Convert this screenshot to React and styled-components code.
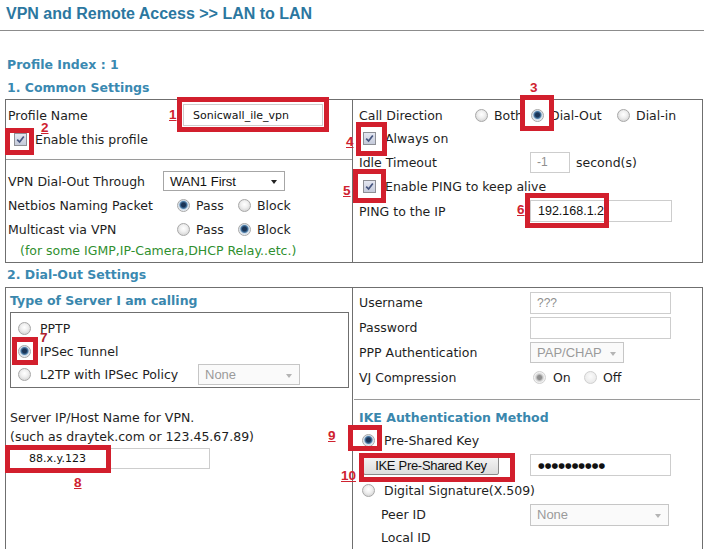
import React from "react";
import styled, { createGlobalStyle } from "styled-components";

const Global = createGlobalStyle`
  html, body { margin: 0; padding: 0; overflow: hidden; background: #fff; }
  body {
    font-family: "DejaVu Sans", Verdana, sans-serif;
    font-size: 12.5px;
    color: #1e1e1e;
  }
`;

const Page = styled.div`
  position: relative;
  width: 704px;
  height: 549px;
  overflow: hidden;
`;

const Title = styled.div`
  height: 31px;
  box-sizing: border-box;
  border-bottom: 1px solid #8c8c8c;
  padding-left: 6px;
  font: bold 16px "Liberation Sans", Arial, sans-serif;
  line-height: 28px;
  color: #2b77a0;
`;

const Content = styled.div`
  padding-top: 23px;
`;

const Heading = styled.div`
  height: 22px;
  line-height: 22px;
  padding-left: 7px;
  margin-top: ${(p) => p.$mt || 0}px;
  margin-bottom: ${(p) => p.$mb || 0}px;
  font-weight: bold;
  color: #3a89b1;
`;

const Table = styled.div`
  margin-left: 5px;
  width: 698px;
  height: ${(p) => p.$h}px;
  box-sizing: border-box;
  border: 1px solid #6f6f6f;
  display: grid;
  grid-template-columns: 347px 1fr;
`;

const Cell = styled.div`
  display: flex;
  flex-direction: column;
  padding-top: ${(p) => p.$pt || 0}px;
  border-right: ${(p) => (p.$divider ? "1px solid #6f6f6f" : "none")};
`;

const Row = styled.div`
  display: flex;
  align-items: center;
  height: ${(p) => p.$h}px;
  flex: none;
  padding-left: ${(p) => p.$pl || 0}px;
  margin-top: ${(p) => p.$mt || 0}px;
  white-space: nowrap;
`;

const Label = styled.span`
  width: ${(p) => p.$w}px;
  margin-left: ${(p) => p.$ml || 0}px;
  flex: none;
`;

const Unit = styled.span`
  margin-left: 6px;
`;

const Rule = styled.div`
  height: 1px;
  flex: none;
  background: #9a9a9a;
  margin: ${(p) => p.$m};
`;

const Field = styled.div`
  width: ${(p) => p.$w}px;
  height: ${(p) => p.$h}px;
  box-sizing: border-box;
  border: 1px solid #cdcdcd;
  background: #fff;
  display: flex;
  align-items: center;
  padding-left: ${(p) => p.$pl || 6}px;
  margin-left: ${(p) => p.$ml || 0}px;
  font-family: ${(p) =>
    p.$verdana ? `"DejaVu Sans", Verdana, sans-serif` : `"Liberation Sans", Arial, sans-serif`};
  font-size: ${(p) => p.$fs || 12}px;
  color: ${(p) => (p.$muted ? "#8f8f8f" : "#111")};
  flex: none;
`;

const Dots = styled.span`
  font-family: "DejaVu Sans", sans-serif;
  font-size: 7.6px;
  letter-spacing: 0.1px;
  color: #111;
`;

const Select = styled.div`
  position: relative;
  width: ${(p) => p.$w}px;
  height: ${(p) => p.$h}px;
  box-sizing: border-box;
  border: 1px solid ${(p) => (p.$off ? "#c6c6c6" : "#a6a6a6")};
  background: ${(p) => (p.$off ? "#fafafa" : "#fff")};
  display: flex;
  align-items: center;
  padding-left: 6px;
  font: 13px "Liberation Sans", Arial, sans-serif;
  color: ${(p) => (p.$off ? "#9a9a9a" : "#111")};
  flex: none;

  &::after {
    content: "";
    position: absolute;
    right: 7px;
    top: 50%;
    margin-top: -1px;
    border-left: 3.5px solid transparent;
    border-right: 3.5px solid transparent;
    border-top: 4px solid ${(p) => (p.$off ? "#b4b4b4" : "#222")};
  }
`;

const Opt = styled.span`
  display: inline-flex;
  align-items: center;
  gap: ${(p) => p.$gap || 6}px;
  width: ${(p) => (p.$w ? `${p.$w}px` : "auto")};
  flex: none;
`;

const RadioDot = styled.span`
  width: 13px;
  height: 13px;
  box-sizing: border-box;
  border-radius: 50%;
  flex: none;
  border: 1px solid ${(p) => (p.$dim ? "#d0d0d0" : "#a8a8a8")};
  background: ${(p) =>
    p.$on
      ? p.$dim
        ? "radial-gradient(circle, #8f8f8f 0 2px, #cfcfcf 3.5px, #f2f2f2 5px)"
        : "radial-gradient(circle at 50% 45%, #1b3557 0 2px, #4a7ca8 3.5px, #cfdbe7 4.5px, #eef2f6 6px)"
      : p.$dim
      ? "radial-gradient(circle at 50% 40%, #fbfbfb 0, #e4e4e4 100%)"
      : "radial-gradient(circle at 50% 40%, #ffffff 0, #f0f0f0 40%, #c9c9c9 100%)"};
`;

const Box = styled.span`
  width: 13px;
  height: 13px;
  box-sizing: border-box;
  border: 1px solid #8d8f95;
  background: linear-gradient(#e4e7f1, #c4cada);
  display: inline-flex;
  align-items: center;
  justify-content: center;
  flex: none;
  margin-left: ${(p) => p.$ml || 0}px;
  margin-right: ${(p) => p.$mr || 8}px;
`;

const Green = styled.span`
  color: #2f8f2f;
`;

const SubHead = styled.span`
  font-weight: bold;
  color: #3a87ad;
`;

const TypeBox = styled.div`
  margin: 1px 3px 0 4px;
  border: 1px solid #6f6f6f;
  padding: 4px 0 1px;
`;

const Note = styled.div`
  margin-top: ${(p) => p.$mt || 0}px;
  padding-left: 4px;
  line-height: 19px;
`;

const HostInput = styled(Field)`
  margin-top: 2px;
`;

const KeyButton = styled.div`
  width: 136px;
  height: 20px;
  box-sizing: border-box;
  margin-left: 4px;
  border: 1px solid #8a8a8a;
  border-radius: 2px;
  background: linear-gradient(#f6f6f6, #dcdcdc);
  display: flex;
  align-items: center;
  justify-content: center;
  font: 13px "Liberation Sans", Arial, sans-serif;
  letter-spacing: -0.3px;
  color: #111;
  flex: none;
`;

/* annotations drawn over the screenshot */
const Mark = styled.div`
  position: absolute;
  left: ${(p) => p.$x}px;
  top: ${(p) => p.$y}px;
  width: ${(p) => p.$w}px;
  height: ${(p) => p.$h}px;
  box-sizing: border-box;
  border: 5px solid #d21f2d;
  pointer-events: none;
`;

const Num = styled.span`
  position: absolute;
  left: ${(p) => p.$x}px;
  top: ${(p) => p.$y}px;
  font: bold 13.5px/14px "Liberation Sans", Arial, sans-serif;
  color: ${(p) => p.$c || "#cf2230"};
  text-decoration: ${(p) => (p.$u ? "underline" : "none")};
  text-underline-offset: 1px;
`;

const Radio = ({ on, dim, label, w, gap }) => (
  <Opt $w={w} $gap={gap}>
    <RadioDot $on={on} $dim={dim} />
    {label && <span>{label}</span>}
  </Opt>
);

const Check = ({ ml, mr }) => (
  <Box $ml={ml} $mr={mr}>
    <svg width="9" height="9" viewBox="0 0 9 9">
      <path d="M1.2 4.6 L3.6 7 L7.8 1.4" fill="none" stroke="#45557f" strokeWidth="1.7" />
    </svg>
  </Box>
);

const marks = [
  { x: 177, y: 97, w: 152, h: 35 },
  { x: 5, y: 128, w: 29, h: 27 },
  { x: 520, y: 95, w: 34, h: 36 },
  { x: 356, y: 122, w: 31, h: 34 },
  { x: 353, y: 169, w: 33, h: 34 },
  { x: 525, y: 193, w: 84, h: 35 },
  { x: 12, y: 337, w: 26, h: 28 },
  { x: 5, y: 445, w: 106, h: 28 },
  { x: 348, y: 425, w: 34, h: 26 },
  { x: 359, y: 453, w: 156, h: 29 },
];

const nums = [
  { n: "1", x: 169, y: 108, u: true },
  { n: "2", x: 41, y: 121, u: true },
  { n: "3", x: 530, y: 81 },
  { n: "4", x: 346, y: 135, u: true },
  { n: "5", x: 343, y: 184, u: true },
  { n: "6", x: 517, y: 203, u: true },
  { n: "7", x: 40, y: 331, c: "#b0202e" },
  { n: "8", x: 74, y: 476, u: true },
  { n: "9", x: 328, y: 429, u: true },
  { n: "10", x: 341, y: 469, u: true },
];

export default function App() {
  return (
    <Page>
      <Global />
      <Title>VPN and Remote Access &gt;&gt; LAN to LAN</Title>
      <Content>
        <Heading>Profile Index : 1</Heading>
        <Heading $mt={1} $mb={0}>1. Common Settings</Heading>
        <Table $h={164}>
          <Cell $divider $pt={3}>
            <Row $h={24} $pl={2}>
              <Label $w={175}>Profile Name</Label>
              <Field $w={140} $h={22} $pl={9} $verdana $fs={11}>
                Sonicwall_ile_vpn
              </Field>
            </Row>
            <Row $h={24} $pl={2}>
              <Check ml={6} mr={8} />
              Enable this profile
            </Row>
            <Rule $m="8px 0 9px" />
            <Row $h={24} $pl={2}>
              <Label $w={155}>VPN Dial-Out Through</Label>
              <Select $w={122} $h={20}>WAN1 First</Select>
            </Row>
            <Row $h={24} $pl={2}>
              <Label $w={169}>Netbios Naming Packet</Label>
              <Radio on label="Pass" w={61} />
              <Radio label="Block" />
            </Row>
            <Row $h={24} $pl={2}>
              <Label $w={169}>Multicast via VPN</Label>
              <Radio label="Pass" w={61} />
              <Radio on label="Block" />
            </Row>
            <Row $h={18} $pl={14}>
              <Green>(for some IGMP,IP-Camera,DHCP Relay..etc.)</Green>
            </Row>
          </Cell>
          <Cell $pt={3}>
            <Row $h={24} $pl={6}>
              <Label $w={116}>Call Direction</Label>
              <Radio label="Both" w={56} />
              <Radio on label="Dial-Out" w={86} />
              <Radio label="Dial-in" />
            </Row>
            <Row $h={23} $pl={6}>
              <Check ml={4} mr={9} />
              Always on
            </Row>
            <Row $h={24} $pl={6}>
              <Label $w={171}>Idle Timeout</Label>
              <Field $w={40} $h={21} $muted $fs={12}>
                -1
              </Field>
              <Unit>second(s)</Unit>
            </Row>
            <Row $h={25} $pl={6}>
              <Check ml={4} mr={9} />
              Enable PING to keep alive
            </Row>
            <Row $h={24} $pl={6}>
              <Label $w={171}>PING to the IP</Label>
              <Field $w={142} $h={22} $pl={7} $fs={12.5}>
                192.168.1.2
              </Field>
            </Row>
          </Cell>
        </Table>
        <Heading $mt={1} $mb={1}>2. Dial-Out Settings</Heading>
        <Table $h={290}>
          <Cell $divider>
            <Row $h={22} $mt={1} $pl={4}>
              <SubHead>Type of Server I am calling</SubHead>
            </Row>
            <TypeBox>
              <Row $h={23} $pl={7}>
                <Radio label="PPTP" gap={9} />
              </Row>
              <Row $h={23} $pl={7}>
                <Radio on label="IPSec Tunnel" gap={9} />
              </Row>
              <Row $h={23} $pl={7}>
                <Radio gap={9} />
                <Label $w={158} $ml={9}>
                  L2TP with IPSec Policy
                </Label>
                <Select $w={102} $h={21} $off>
                  None
                </Select>
              </Row>
            </TypeBox>
            <Note $mt={20}>Server IP/Host Name for VPN.</Note>
            <Note>(such as draytek.com or 123.45.67.89)</Note>
            <Row $h={23} $pl={1}>
              <HostInput $w={203} $h={21} $pl={21} $verdana $fs={11}>
                88.x.y.123
              </HostInput>
            </Row>
          </Cell>
          <Cell $pt={2}>
            <Row $h={25} $pl={6}>
              <Label $w={171}>Username</Label>
              <Field $w={141} $h={22} $muted $fs={12}>
                ???
              </Field>
            </Row>
            <Row $h={25} $pl={6}>
              <Label $w={171}>Password</Label>
              <Field $w={141} $h={22} />
            </Row>
            <Row $h={25} $pl={6}>
              <Label $w={171}>PPP Authentication</Label>
              <Select $w={94} $h={21} $off>
                PAP/CHAP
              </Select>
            </Row>
            <Row $h={25} $pl={6}>
              <Label $w={174}>VJ Compression</Label>
              <Radio on dim label="On" w={51} gap={7} />
              <Radio dim label="Off" gap={6} />
            </Row>
            <Rule $m="9px 2px 0 1px" />
            <Row $h={22} $mt={6} $pl={6}>
              <SubHead>IKE Authentication Method</SubHead>
            </Row>
            <Row $h={24} $pl={9}>
              <Radio on label="Pre-Shared Key" gap={9} />
            </Row>
            <Row $h={26} $pl={6}>
              <KeyButton>IKE Pre-Shared Key</KeyButton>
              <Field $w={141} $h={22} $ml={31} $pl={7}>
                <Dots>●●●●●●●●●●</Dots>
              </Field>
            </Row>
            <Row $h={25} $pl={9}>
              <Radio label="Digital Signature(X.509)" gap={9} />
            </Row>
            <Row $h={23} $pl={28}>
              <Label $w={149}>Peer ID</Label>
              <Select $w={139} $h={22} $off>
                None
              </Select>
            </Row>
            <Row $h={22} $pl={28}>
              Local ID
            </Row>
          </Cell>
        </Table>
      </Content>
      {marks.map((m, i) => (
        <Mark key={i} $x={m.x} $y={m.y} $w={m.w} $h={m.h} />
      ))}
      {nums.map((n) => (
        <Num key={n.n} $x={n.x} $y={n.y} $u={n.u} $c={n.c}>
          {n.n}
        </Num>
      ))}
    </Page>
  );
}
